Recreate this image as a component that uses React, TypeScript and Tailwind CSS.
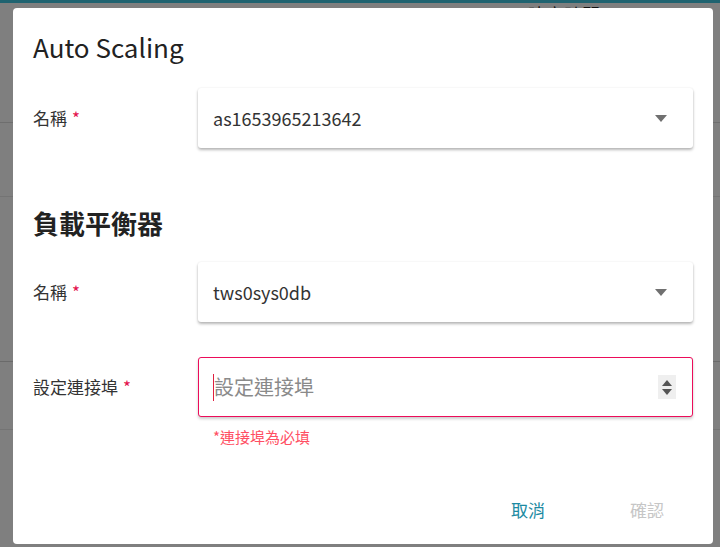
import React from "react";

const font = { fontFamily: '"Noto Sans CJK TC", "Noto Sans", sans-serif' };

function Caret() {
  return (
    <svg width="12" height="7" viewBox="0 0 12 7" className="shrink-0">
      <path d="M0 0 L12 0 L6 7 Z" fill="#707070" />
    </svg>
  );
}

function SelectBox({ value }: { value: string }) {
  return (
    <div className="flex h-[60px] w-[495px] items-center justify-between rounded-[3px] bg-white pl-[15px] pr-[26px] shadow-[0_2px_3px_rgba(0,0,0,0.28),0_0_2px_rgba(0,0,0,0.08)]">
      <span className="text-[18px] text-[#333]">{value}</span>
      <Caret />
    </div>
  );
}

function Label({ text }: { text: string }) {
  return (
    <div className="w-[165px] shrink-0 text-[17px] text-[#333]">
      {text}
      <span className="ml-[5px] text-[#e3124d]">*</span>
    </div>
  );
}

export default function App() {
  return (
    <div className="relative h-[547px] w-[720px] overflow-hidden bg-white" style={font}>
      {/* page underneath the dialog */}
      <div className="flex h-full flex-col">
        <div className="h-[3px] bg-[#3fc6e0]" />
        <div className="relative h-[120px] border-b border-[#dcdcdc]">
          <span className="absolute left-[528px] top-[-2px] text-[18px] text-[#222]">建立時間</span>
        </div>
        <div className="h-[74px] border-b border-[#e8e8e8]" />
        <div className="h-[165px] border-b border-[#d4d4d4]" />
        <div className="h-[68px] border-b border-[#e8e8e8]" />
        <div className="flex-1" />
      </div>

      {/* dimmed backdrop with the dialog */}
      <div className="absolute inset-0 bg-black/50 pl-[13px] pt-[8px]">
        <div className="flex h-[536px] w-[700px] flex-col rounded-[4px] bg-white px-[20px] pt-[22px]">
          <h2 className="text-[26px] leading-[34px] text-[#222]">Auto Scaling</h2>

          <div className="mt-[24px] flex items-center">
            <Label text="名稱" />
            <SelectBox value="as1653965213642" />
          </div>

          <h3 className="mt-[58px] text-[26px] font-bold leading-[34px] text-[#222]">負載平衡器</h3>

          <div className="mt-[22px] flex items-center">
            <Label text="名稱" />
            <SelectBox value="tws0sys0db" />
          </div>

          <div className="mt-[35px] flex items-center">
            <Label text="設定連接埠" />
            <div className="flex h-[60px] w-[495px] items-center justify-between rounded-[3px] border border-[#ec0c5a] bg-white pl-[14px] pr-[16px] shadow-[0_2px_3px_rgba(0,0,0,0.2)]">
              <div className="flex items-center">
                <span className="h-[27px] w-px bg-[#e02040]" />
                <span className="text-[20px] text-[#8a8a8a]">設定連接埠</span>
              </div>
              <div className="flex h-[24px] w-[18px] flex-col items-center justify-center gap-[3px] bg-[#efefef]">
                <svg width="10" height="6" viewBox="0 0 10 6">
                  <path d="M0 6 L10 6 L5 0 Z" fill="#555" />
                </svg>
                <svg width="10" height="6" viewBox="0 0 10 6">
                  <path d="M0 0 L10 0 L5 6 Z" fill="#555" />
                </svg>
              </div>
            </div>
          </div>

          <div className="mt-[10px] pl-[180px] text-[15px] leading-[20px] text-[#ff4f63]">*連接埠為必填</div>

          <div className="mt-auto mb-[22px] flex justify-end gap-[85px] pr-[29px]">
            <button className="text-[17px] leading-[24px] text-[#1b8aa2]">取消</button>
            <button className="text-[17px] leading-[24px] text-[#c6c6c6]">確認</button>
          </div>
        </div>
      </div>
    </div>
  );
}
